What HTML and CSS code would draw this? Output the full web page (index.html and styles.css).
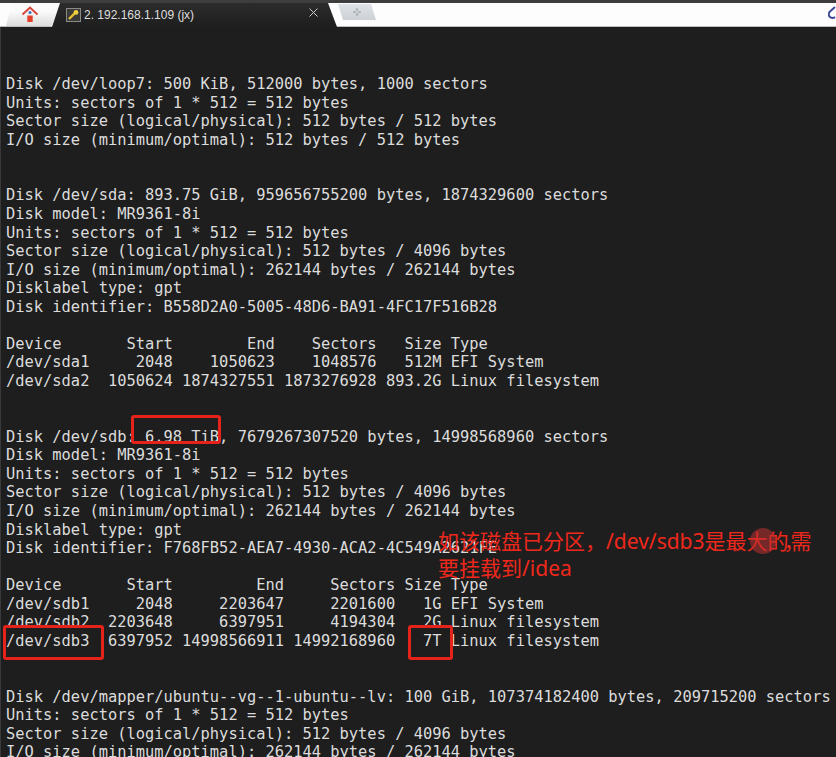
FILE: index.html
```html
<!DOCTYPE html>
<html lang="zh">
<head>
<meta charset="utf-8">
<title>2. 192.168.1.109 (jx)</title>
<link rel="stylesheet" href="styles.css">
</head>
<body>
<div class="topstrip"></div>
<header class="tabbar">
  <div class="hometab">
    <svg class="homeicon" width="18" height="18" viewBox="0 0 18 18">
      <path d="M4.500 8 9 3.800 13.500 8v2h-9z" fill="#eef2f6"/>
      <path d="M1.500 9.500 9 2.500l7.500 7" fill="none" stroke="#d8453a" stroke-width="2"/>
      <circle cx="9" cy="7.500" r="1.500" fill="#3f6fb5"/>
      <rect x="6.300" y="10.500" width="5.400" height="6.500" fill="#e2402a"/>
    </svg>
  </div>
  <div class="activetab">
    <svg class="keyicon" width="15" height="14" viewBox="0 0 15 14">
      <rect x=".5" y=".5" width="14" height="13" fill="#3a3a38" stroke="#8a8a86"/>
      <path d="M3 11 9 5" stroke="#e8c030" stroke-width="2.400"/>
      <circle cx="10" cy="4.400" r="2.400" fill="#f0cf40"/>
    </svg>
    <span class="tabtitle">2. 192.168.1.109 (jx)</span>
    <svg class="closeicon" width="9" height="9" viewBox="0 0 9 9"><path d="M.5.5l8 8M8.500.5l-8 8" stroke="#c8c8c8" stroke-width="1"/></svg>
  </div>
  <div class="newtab">
    <svg width="8" height="8" viewBox="0 0 8 8"><path d="M4 .5v7M.5 4h7" stroke="#969ea6" stroke-width="2.200"/><path d="M4 1.500v5M1.500 4h5" stroke="#eef0f2" stroke-width=".8"/></svg>
  </div>
  <div class="spacer"></div>
  <svg class="cornericon" width="8" height="14" viewBox="0 0 8 14"><path d="M7 2 2 6.500a3.600 3.600 0 0 0 5 5.500" fill="none" stroke="#3d4a9a" stroke-width="2"/></svg>
</header>
<main class="terminal">
<pre class="output">Disk /dev/loop7: 500 KiB, 512000 bytes, 1000 sectors
Units: sectors of 1 * 512 = 512 bytes
Sector size (logical/physical): 512 bytes / 512 bytes
I/O size (minimum/optimal): 512 bytes / 512 bytes


Disk /dev/sda: 893.75 GiB, 959656755200 bytes, 1874329600 sectors
Disk model: MR9361-8i
Units: sectors of 1 * 512 = 512 bytes
Sector size (logical/physical): 512 bytes / 4096 bytes
I/O size (minimum/optimal): 262144 bytes / 262144 bytes
Disklabel type: gpt
Disk identifier: B558D2A0-5005-48D6-BA91-4FC17F516B28

Device       Start        End    Sectors   Size Type
/dev/sda1     2048    1050623    1048576   512M EFI System
/dev/sda2  1050624 1874327551 1873276928 893.2G Linux filesystem


Disk /dev/sdb: 6.98 TiB, 7679267307520 bytes, 14998568960 sectors
Disk model: MR9361-8i
Units: sectors of 1 * 512 = 512 bytes
Sector size (logical/physical): 512 bytes / 4096 bytes
I/O size (minimum/optimal): 262144 bytes / 262144 bytes
Disklabel type: gpt
Disk identifier: F768FB52-AEA7-4930-ACA2-4C549A2621FE

Device       Start         End     Sectors Size Type
/dev/sdb1     2048     2203647     2201600   1G EFI System
/dev/sdb2  2203648     6397951     4194304   2G Linux filesystem
/dev/sdb3  6397952 14998566911 14992168960   7T Linux filesystem


Disk /dev/mapper/ubuntu--vg--1-ubuntu--lv: 100 GiB, 107374182400 bytes, 209715200 sectors
Units: sectors of 1 * 512 = 512 bytes
Sector size (logical/physical): 512 bytes / 4096 bytes
I/O size (minimum/optimal): 262144 bytes / 262144 bytes</pre>
<div class="mark mark-size"></div>
<div class="mark mark-dev"></div>
<div class="mark mark-total"></div>
<p class="note">如该磁盘已分区，/dev/sdb3是最大<span class="squeeze-char">的</span><span class="squeeze-comma">，</span>需要挂载到/idea</p>
<div class="pointer"></div>
</main>
</body>
</html>
```
FILE: styles.css
```css
html, body {
  margin: 0;
  height: 100%;
  overflow: hidden;
  background: #1e1e1e;
}
body {
  display: flex;
  flex-direction: column;
  height: 757px;
}
.topstrip {
  height: 3px;
  background: #3d3d3d;
  flex: none;
}
.tabbar {
  height: 23px;
  flex: none;
  display: flex;
  align-items: stretch;
  background: #fdfdfd;
  border-bottom: 1px solid #bdbdbd;
}
.hometab {
  width: 60px;
  margin-right: -8px;
  background: linear-gradient(#fbfbfb 35%, #dcdcdc);
  clip-path: polygon(12px 0, 100% 0, 52px 96%, 50px 100%, 6px 100%);
  display: flex;
  justify-content: center;
  box-sizing: border-box;
}
.homeicon {
  margin-top: 2px;
}
.activetab {
  width: 285px;
  margin-bottom: -1px;
  background: linear-gradient(#2c2c2c, #1e1e1e);
  clip-path: polygon(8px 0, 276px 0, 285px 100%, 0 100%);
  display: flex;
  align-items: flex-start;
  padding-left: 14px;
  box-sizing: border-box;
}
.keyicon {
  margin-top: 5px;
  flex: none;
}
.tabtitle {
  margin-left: 3px;
  margin-top: 3px;
  font: 12px/19px "Liberation Sans", Arial, sans-serif;
  color: #dedede;
  white-space: nowrap;
}
.closeicon {
  margin-left: 115px;
  margin-top: 5px;
  flex: none;
}
.newtab {
  width: 38px;
  height: 16px;
  margin: 1px 0 0 1px;
  background: linear-gradient(#dfe2e6, #ccd1d6);
  clip-path: polygon(0 0, 33px 0, 38px 100%, 5px 100%);
  display: flex;
  align-items: center;
  justify-content: center;
}
.spacer {
  flex: 1;
}
.cornericon {
  margin-top: 2px;
  flex: none;
}
.terminal {
  flex: 1;
  position: relative;
  background: #1e1e1e;
  border-left: 1px solid #3a3a3a;
  overflow: hidden;
}
.output {
  margin: 0;
  padding: 48px 0 0 5px;
  font-family: "DejaVu Sans Mono", monospace;
  font-size: 15.4px;
  line-height: 18.56px;
  color: #dcdcdc;
  white-space: pre;
}
.mark {
  position: absolute;
  border: 3px solid #e5231b;
  border-radius: 3px;
  box-sizing: border-box;
}
.mark-size {
  left: 130px;
  top: 388px;
  width: 90px;
  height: 29px;
}
.mark-dev {
  left: 2px;
  top: 598px;
  width: 101px;
  height: 35px;
}
.mark-total {
  left: 407px;
  top: 598px;
  width: 45px;
  height: 35px;
}
.note {
  position: absolute;
  left: 437px;
  top: 501px;
  width: 385px;
  margin: 0;
  font-family: "Noto Sans", "Noto Sans CJK SC", sans-serif;
  font-size: 21px;
  line-height: 27px;
  color: #f0281c;
}
.squeeze-char {
  letter-spacing: -5px;
}
.squeeze-comma {
  letter-spacing: -14px;
}
.pointer {
  position: absolute;
  left: 749px;
  top: 501px;
  width: 26px;
  height: 26px;
  border-radius: 50%;
  background: rgba(190, 50, 50, 0.55);
}
```
